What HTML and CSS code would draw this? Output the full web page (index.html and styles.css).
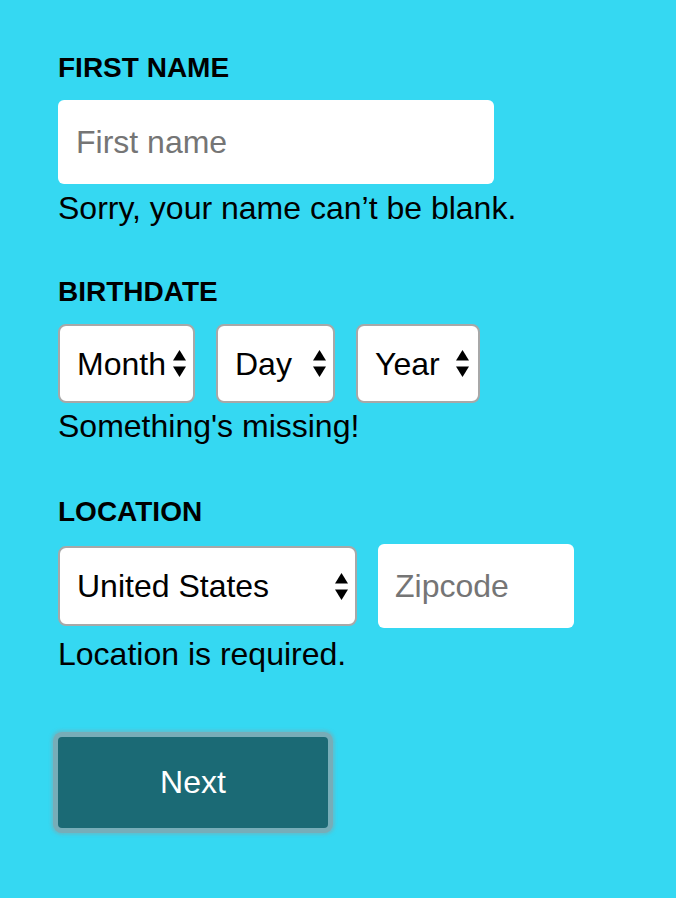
FILE: index.html
```html
<!DOCTYPE html>
<html lang="en">
<head>
<meta charset="utf-8">
<title>Form</title>
<link rel="stylesheet" href="styles.css">
</head>
<body>
<form class="form">
  <div class="field">
    <label class="label" for="first">FIRST NAME</label>
    <input class="text-input name-input" id="first" type="text" placeholder="First name">
    <p class="error">Sorry, your name can’t be blank.</p>
  </div>

  <div class="field field-date">
    <div class="label">BIRTHDATE</div>
    <div class="row">
      <div class="select select-month">
        <span class="select-text">Month</span>
        <svg class="arrows" width="13" height="27" viewBox="0 0 13 27"><polygon points="0,10.5 6.5,0 13,10.5" /><polygon points="0,16.5 13,16.5 6.5,27" /></svg>
      </div>
      <div class="select select-day">
        <span class="select-text">Day</span>
        <svg class="arrows" width="13" height="27" viewBox="0 0 13 27"><polygon points="0,10.5 6.5,0 13,10.5" /><polygon points="0,16.5 13,16.5 6.5,27" /></svg>
      </div>
      <div class="select select-year">
        <span class="select-text">Year</span>
        <svg class="arrows" width="13" height="27" viewBox="0 0 13 27"><polygon points="0,10.5 6.5,0 13,10.5" /><polygon points="0,16.5 13,16.5 6.5,27" /></svg>
      </div>
    </div>
    <p class="error error-date">Something's missing!</p>
  </div>

  <div class="field field-location">
    <div class="label">LOCATION</div>
    <div class="row row-location">
      <div class="select select-country">
        <span class="select-text">United States</span>
        <svg class="arrows" width="13" height="27" viewBox="0 0 13 27"><polygon points="0,10.5 6.5,0 13,10.5" /><polygon points="0,16.5 13,16.5 6.5,27" /></svg>
      </div>
      <input class="text-input zip-input" type="text" placeholder="Zipcode">
    </div>
    <p class="error error-location">Location is required.</p>
  </div>

  <button class="next" type="button">Next</button>
</form>
</body>
</html>
```

FILE: styles.css
```css
html, body {
  margin: 0;
  padding: 0;
}

body {
  background: #35d8f2;
  font-family: "Liberation Sans", Arial, Helvetica, sans-serif;
  color: #000;
  height: 898px;
}

.form {
  padding: 52px 0 0 58px;
  display: flex;
  flex-direction: column;
  align-items: flex-start;
}

.field {
  display: flex;
  flex-direction: column;
  align-items: flex-start;
  margin-bottom: 50px;
}

.field-date {
  margin-bottom: 52px;
}

.field-location {
  margin-bottom: 0;
}

.label {
  display: block;
  font-size: 28px;
  font-weight: bold;
  line-height: 32px;
  margin-bottom: 16px;
}

.text-input {
  box-sizing: border-box;
  border: none;
  border-radius: 6px;
  background: #fff;
  height: 84px;
  padding: 0 18px;
  font-family: inherit;
  font-size: 32px;
  color: #000;
  outline: none;
  margin: 0;
}

.text-input::placeholder {
  color: #757575;
  opacity: 1;
}

.name-input {
  width: 436px;
  padding-left: 18px;
}

.zip-input {
  width: 196px;
  padding-left: 17px;
}

.error {
  margin: 6px 0 0;
  font-size: 32px;
  line-height: 36px;
}

.error-date {
  margin-top: 5px;
}

.error-location {
  margin-top: 8px;
}

.row {
  display: flex;
  align-items: center;
  gap: 21px;
}

.select {
  box-sizing: border-box;
  position: relative;
  display: flex;
  align-items: center;
  height: 79px;
  border: 2px solid #a8a8a8;
  border-radius: 8px;
  background: #fff;
  padding-left: 17px;
  font-size: 32px;
}

.select-text {
  line-height: 1;
}

.arrows {
  position: absolute;
  right: 7px;
  top: 50%;
  margin-top: -13.5px;
  fill: #000;
}

.select-month {
  width: 137px;
}

.select-day {
  width: 119px;
}

.select-year {
  width: 124px;
}

.select-year .arrows {
  right: 9px;
}

.select-country {
  width: 299px;
  height: 80px;
}

.next {
  margin: 65px 0 0;
  width: 270px;
  height: 91px;
  border: none;
  border-radius: 4px;
  background: #1b6a75;
  color: #fff;
  font-family: inherit;
  font-size: 32px;
  box-shadow: 0 0 0 5px #77adb8, 0 0 3px 7px rgba(119, 173, 184, 0.55);
  cursor: pointer;
}
```
